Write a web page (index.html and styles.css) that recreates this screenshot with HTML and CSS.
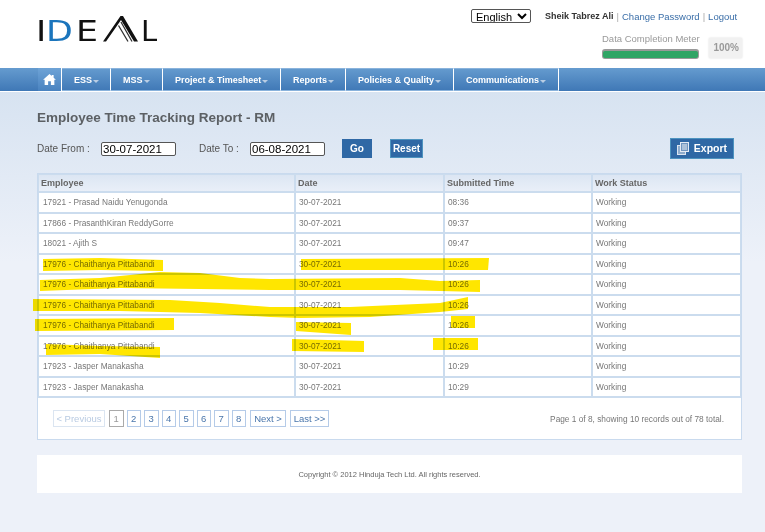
FILE: index.html
```html
<!DOCTYPE html>
<html lang="en">
<head>
<meta charset="utf-8">
<title>Employee Time Tracking Report - RM</title>
<link rel="stylesheet" href="styles.css">
</head>
<body>
<header class="top">
  <div class="logo"><span class="l-i">I</span><span class="l-d">D</span><span class="l-e">E</span><svg class="l-a" width="35" height="26" viewBox="0 0 35 26"><path d="M0 25.5 L17.500 0 L20 0 L35 25.500 L31 25.500 L18 4 L3 25.500 Z" fill="#111"/><path d="M18 6 L29 25.500 M15.500 9.500 L25 25.500" stroke="#333" stroke-width="1.300" fill="none"/></svg><span class="l-l">L</span></div>
  <div class="account">
    <div class="user-row">
      <select class="lang"><option>English</option></select>
      <span class="user">Sheik Tabrez Ali</span><span class="sep">|</span><a class="link">Change Password</a><span class="sep">|</span><a class="link">Logout</a>
    </div>
    <div class="meter-row">
      <div class="meter">
        <div class="meter-label">Data Completion Meter</div>
        <div class="meter-bar"><div class="meter-fill"></div></div>
      </div>
      <div class="meter-value">100%</div>
    </div>
  </div>
</header>
<nav class="nav">
  <a class="nav-home"><svg width="13" height="11" viewBox="0 0 14 12"><path d="M7 0 L9.500 2.300 V1 H11.500 V4.100 L14 6.400 H12.300 V12 H8.500 V8 H5.500 V12 H1.700 V6.400 H0 Z" fill="#fff"/></svg></a>
  <a class="nav-item n1">ESS<i class="caret"></i></a>
  <a class="nav-item n2">MSS<i class="caret"></i></a>
  <a class="nav-item n3">Project &amp; Timesheet<i class="caret"></i></a>
  <a class="nav-item n4">Reports<i class="caret"></i></a>
  <a class="nav-item n5">Policies &amp; Quality<i class="caret"></i></a>
  <a class="nav-item n6">Communications<i class="caret"></i></a>
</nav>
<main class="content">
  <h1 class="title">Employee Time Tracking Report - RM</h1>
  <div class="filters">
    <label class="f-label from">Date From :</label>
    <input class="date d1" value="30-07-2021">
    <label class="f-label to">Date To :</label>
    <input class="date d2" value="06-08-2021">
    <button class="btn go">Go</button>
    <button class="btn reset">Reset</button>
    <button class="btn export"><svg width="12" height="13" viewBox="0 0 12 13"><rect x="0.500" y="3.500" width="8" height="9" fill="#8fadcd" stroke="#dbe5f0"/><rect x="3.500" y="0.500" width="8" height="9" fill="#6f95bf" stroke="#e4ebf4"/><path d="M5 3 H10 M5 5 H10 M5 7 H10" stroke="#e8eef5"/></svg>Export</button>
  </div>
  <section class="panel">
    <div class="grid">
      <div class="th">Employee</div><div class="th">Date</div><div class="th">Submitted Time</div><div class="th">Work Status</div>
      <div class="td">17921 - Prasad Naidu Yenugonda</div><div class="td">30-07-2021</div><div class="td">08:36</div><div class="td">Working</div>
      <div class="td">17866 - PrasanthKiran ReddyGorre</div><div class="td">30-07-2021</div><div class="td">09:37</div><div class="td">Working</div>
      <div class="td">18021 - Ajith S</div><div class="td">30-07-2021</div><div class="td">09:47</div><div class="td">Working</div>
      <div class="td">17976 - Chaithanya Pittabandi</div><div class="td">30-07-2021</div><div class="td">10:26</div><div class="td">Working</div>
      <div class="td">17976 - Chaithanya Pittabandi</div><div class="td">30-07-2021</div><div class="td">10:26</div><div class="td">Working</div>
      <div class="td">17976 - Chaithanya Pittabandi</div><div class="td">30-07-2021</div><div class="td">10:26</div><div class="td">Working</div>
      <div class="td">17976 - Chaithanya Pittabandi</div><div class="td">30-07-2021</div><div class="td">10:26</div><div class="td">Working</div>
      <div class="td">17976 - Chaithanya Pittabandi</div><div class="td">30-07-2021</div><div class="td">10:26</div><div class="td">Working</div>
      <div class="td">17923 - Jasper Manakasha</div><div class="td">30-07-2021</div><div class="td">10:29</div><div class="td">Working</div>
      <div class="td">17923 - Jasper Manakasha</div><div class="td">30-07-2021</div><div class="td">10:29</div><div class="td">Working</div>
    </div>
    <div class="pager">
      <div class="pages">
        <a class="pg disabled">&lt; Previous</a>
        <a class="pg num current">1</a>
        <a class="pg num">2</a>
        <a class="pg num">3</a>
        <a class="pg num">4</a>
        <a class="pg num">5</a>
        <a class="pg num">6</a>
        <a class="pg num">7</a>
        <a class="pg num">8</a>
        <a class="pg next">Next &gt;</a>
        <a class="pg last">Last &gt;&gt;</a>
      </div>
      <div class="summary">Page 1 of 8, showing 10 records out of 78 total.</div>
    </div>
  </section>
  <footer class="footer">Copyright © 2012 Hinduja Tech Ltd. All rights reserved.</footer>
</main>
<svg class="marker" width="765" height="532" viewBox="0 0 765 532">
  <path d="M43 259 L100 258 L163 260 L163 271 L100 270 L43 271 Z"/>
  <path d="M301 259 L489 258 L488 270 L301 270 Z"/>
  <path d="M40 280 L100 278 L160 272 L200 273 L240 278 L270 279 L400 278 L440 281 L480 280 L480 292 L440 291 L400 290 L270 290 L200 289 L120 288 L40 291 Z"/>
  <path d="M33 299 L170 300 L220 303 L270 307 L350 307 L440 303 L468 297 L468 309 L440 312 L370 317 L300 318 L270 317 L200 313 L120 311 L33 311 Z"/>
  <path d="M35 319 L174 318 L174 330 L35 331 Z"/>
  <path d="M296 322 L351 323 L351 335 L296 331 Z"/>
  <path d="M451 316 L475 316 L475 328 L451 328 Z"/>
  <path d="M46 344 L100 346 L160 347 L160 358 L100 354 L46 355 Z"/>
  <path d="M292 339 L364 341 L364 352 L292 351 Z"/>
  <path d="M433 338 L478 338 L478 350 L433 350 Z"/>
</svg>
</body>
</html>
```
FILE: styles.css
```css
* { box-sizing: border-box; }
html, body { margin: 0; padding: 0; }
body {
  position: relative;
  width: 765px;
  height: 532px;
  overflow: hidden;
  background: #edf1f9;
  font-family: "Liberation Sans", Arial, sans-serif;
  color: #666;
}
.top {
  height: 68px;
  background: #fff;
  display: flex;
  justify-content: space-between;
  padding: 0 23px 0 36px;
}
.logo {
  display: flex;
  align-items: flex-start;
  height: 46px;
  padding-top: 17px;
  font-family: "DejaVu Sans", sans-serif;
  font-size: 29px;
  line-height: 29px;
  color: #111;
}
.logo span { display: block; transform-origin: 0 0; transform: scaleX(1.2); }
.logo .l-l { transform: none; }
.l-i { width: 10px; }
.l-d { color: #1b75bc; width: 30px; }
.l-e { width: 27px; }
.l-a { margin-top: -1px; margin-right: 3px; }
.l-l { width: 16px; }
.account { width: 271px; padding-top: 9px; white-space: nowrap; }
.user-row {
  display: flex;
  align-items: center;
  font-size: 9.500px;
  height: 14px;
}
.lang {
  width: 60px;
  height: 14px;
  margin: 0 14px 0 0;
  padding: 0;
  font: 11px "Liberation Sans", sans-serif;
  color: #000;
  background: #fff;
  border: 1px solid #555;
  border-radius: 2px;
}
.user { font-weight: bold; color: #333; font-size: 9px; }
.sep { color: #aaa; margin: 0 3px; }
.link { color: #3a6ea8; }
.meter-row {
  display: flex;
  align-items: flex-start;
  margin-top: 15px;
  margin-left: 131px;
}
.meter { width: 97px; margin-top: -5px; }
.meter-label { font-size: 9.500px; line-height: 12px; color: #999; white-space: nowrap; }
.meter-bar {
  margin-top: 4px;
  height: 10px;
  background: #999;
  border-radius: 3px;
  padding: 2px 1px 1px;
}
.meter-fill { height: 100%; background: #2fa565; border-radius: 2px; }
.meter-value {
  width: 34px;
  height: 20px;
  margin-left: 10px;
  background: #f1f1f1;
  font-size: 10px;
  font-weight: bold;
  line-height: 20px;
  text-align: right;
  padding-right: 3px;
  color: #999;
  box-shadow: 0 0 2px #ddd;
}
.nav {
  height: 24px;
  display: flex;
  padding-left: 38px;
  background: linear-gradient(#659bcf, #3f78b6);
  border-bottom: 1px solid #fff;
  font-size: 9px;
  font-weight: bold;
  color: #fff;
}
.nav-home {
  width: 24px;
  border-right: 1px solid #fff;
  background: linear-gradient(#6ea3d6, #4a83c0);
  display: flex;
  align-items: center;
  justify-content: center;
}
.nav-item {
  display: flex;
  align-items: center;
  padding-left: 12px;
  border-right: 1px solid #fff;
  border-top: 1px solid #8ab3dc;
  border-bottom: 1px solid #8ab3dc;
  white-space: nowrap;
}
.n1 { width: 49px; }
.n2 { width: 52px; }
.n3 { width: 118px; }
.n4 { width: 65px; }
.n5 { width: 108px; }
.n6 { width: 105px; }
.caret {
  width: 0;
  height: 0;
  margin: 3px 0 0 1px;
  border: 3px solid transparent;
  border-top-color: #b9cde4;
  border-bottom-width: 0;
}
.content {
  height: 440px;
  padding: 0 23px 0 37px;
  background: linear-gradient(#d7e3f1 0, #edf1f9 170px);
}
.title {
  margin: 0;
  padding-top: 17px;
  font-size: 13.500px;
  line-height: 17px;
  font-weight: bold;
  color: #5c6064;
}
.filters {
  display: flex;
  align-items: center;
  height: 21px;
  margin-top: 12px;
}
.f-label { font-size: 10px; color: #555; white-space: nowrap; }
.from { width: 64px; }
.to { width: 51px; margin-left: 23px; }
.date {
  width: 75px;
  height: 14px;
  padding: 0 1px;
  font: 11.500px "Liberation Sans", sans-serif;
  color: #000;
  background: #fff;
  border: 1px solid #555;
  border-radius: 2px;
}
.btn {
  height: 19px;
  padding: 0;
  margin-top: -1px;
  background: #2f68a5;
  border: 1px solid #2f68a5;
  color: #fff;
  font: bold 10px "Liberation Sans", sans-serif;
}
.go { width: 30px; margin-left: 17px; }
.reset { width: 33px; margin-left: 18px; border-color: #4d93bf; }
.export {
  width: 64px;
  height: 21px;
  margin-left: auto;
  margin-right: 8px;
  border-color: #4d93bf;
  display: flex;
  align-items: center;
  justify-content: center;
  gap: 5px;
  font-size: 10.500px;
}
.panel {
  margin-top: 14px;
  width: 705px;
  height: 267px;
  background: #fff;
  border: 1px solid #c9daee;
}
.grid {
  display: grid;
  grid-template-columns: 255px 147px 146px 147px;
  grid-template-rows: 16px repeat(10, 18.500px);
  gap: 2px;
  padding: 1px;
  background: #cbdcee;
  font-size: 8.300px;
  height: 224px;
}
.th {
  background: linear-gradient(#dce6f3, #e9eff8);
  display: flex;
  align-items: center;
  padding-left: 2px;
  font-size: 9px;
  font-weight: bold;
  color: #666;
}
.td {
  background: #fff;
  display: flex;
  align-items: center;
  padding-left: 3px;
  color: #777;
}
.td:nth-child(4n+1) { padding-left: 4px; }
.pager {
  display: flex;
  justify-content: space-between;
  align-items: center;
  height: 41px;
  padding: 0 17px 0 15px;
}
.pages { display: flex; gap: 3px; }
.pg {
  height: 17px;
  line-height: 15px;
  font-size: 9.500px;
  text-align: center;
  color: #4a76ab;
  border: 1px solid #b5cbe8;
}
.num { width: 14.500px; }
.disabled { width: 52px; color: #b9cbe2; border-color: #dbe5f1; margin-right: 1px; }
.current { color: #999; border-color: #aaa; }
.next { width: 36px; margin-left: 1px; }
.last { width: 39px; margin-left: 1px; }
.summary { font-size: 8.300px; color: #777; }
.footer {
  margin-top: 15px;
  width: 705px;
  height: 38px;
  background: #fff;
  display: flex;
  align-items: center;
  justify-content: center;
  font-size: 7.500px;
  color: #666;
}
.marker {
  position: absolute;
  left: 0;
  top: 0;
  pointer-events: none;
  mix-blend-mode: multiply;
}
.marker path { fill: #ffe600; }
```
